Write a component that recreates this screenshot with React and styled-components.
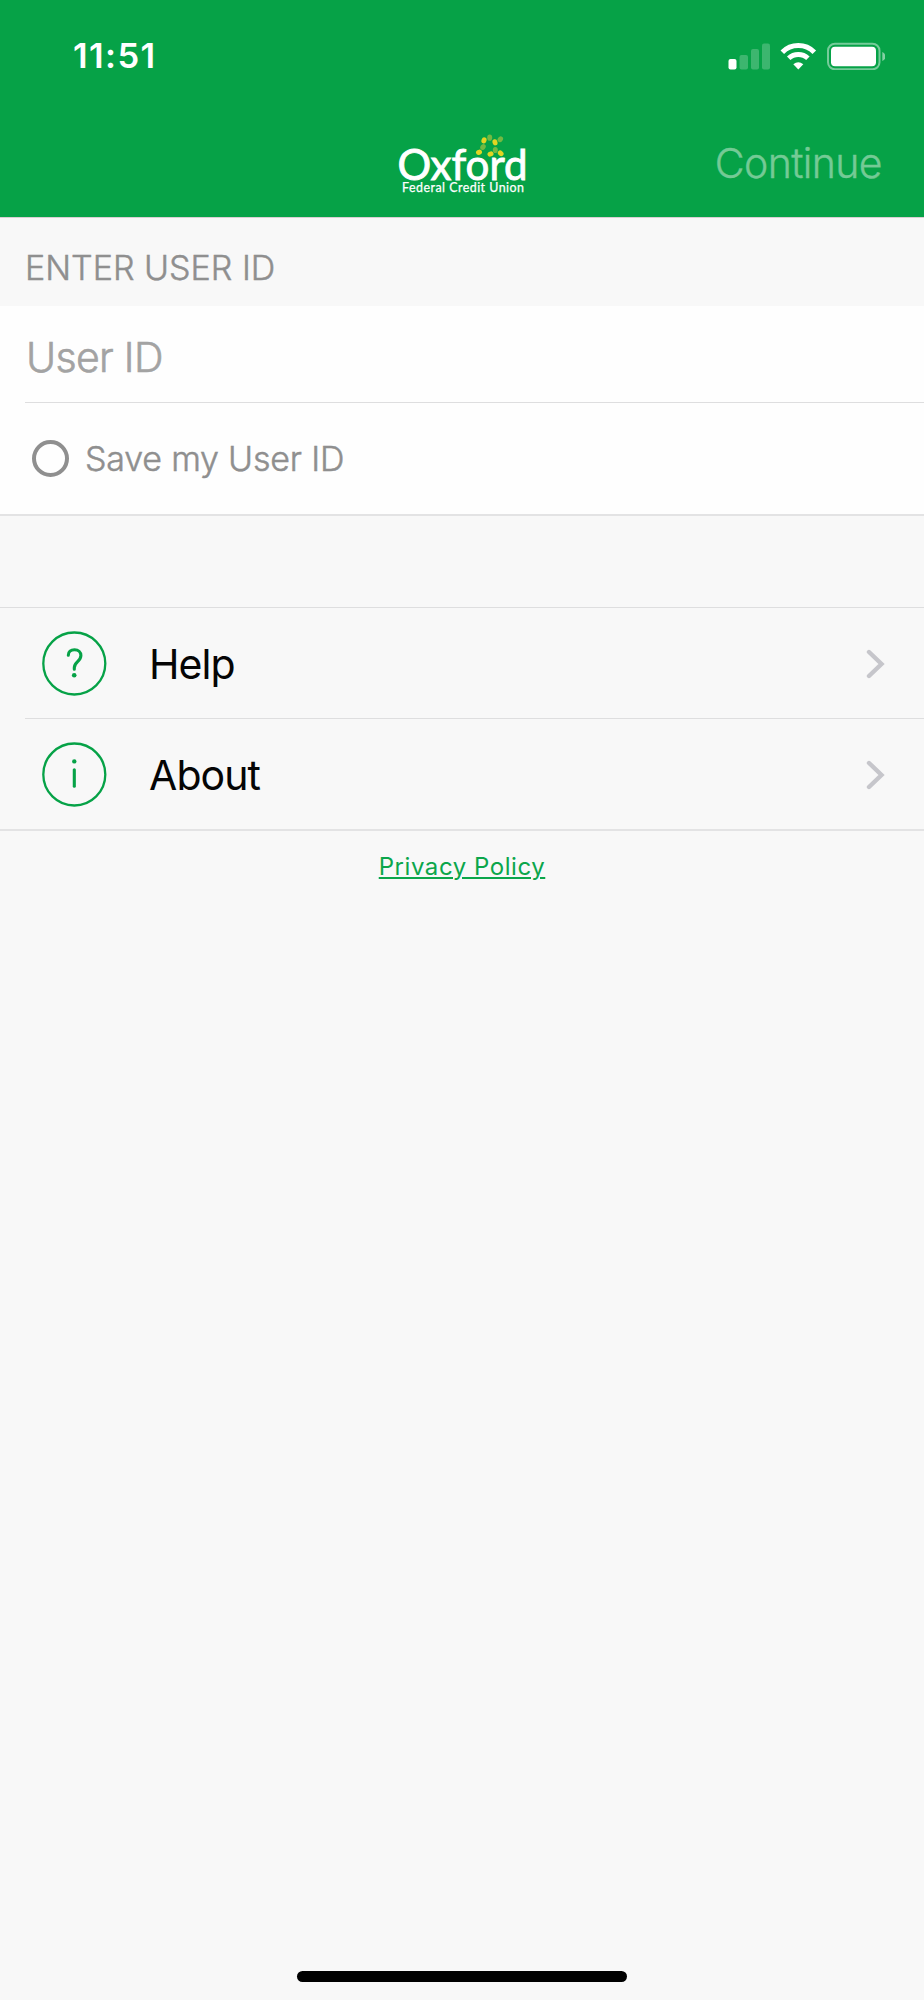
import React from "react";
import styled, { createGlobalStyle } from "styled-components";

const Palette = {
  brand: "#06a247",
  link: "#0ba64b",
  bg: "#f8f8f8",
  panel: "#fefefe",
  line: "#dededf",
  softLine: "#e3e3e4",
  dimmed: "#8f8f8f",
  placeholder: "#a3a3a3",
  chevron: "#c6c6cb",
};

const GlobalStyle = createGlobalStyle`
  * {
    box-sizing: border-box;
  }
  body {
    margin: 0;
    background: ${Palette.bg};
    font-family: Inter, "Liberation Sans", sans-serif;
  }
`;

const Screen = styled.main`
  display: flex;
  flex-direction: column;
  width: 924px;
  height: 2000px;
  background: ${Palette.bg};
`;

const HeaderBox = styled.header`
  height: 217px;
  flex: none;
  background: ${Palette.brand};
  color: #fff;
  box-shadow: 0 1px 0 #d9cfd2;
`;

const StatusBar = styled.div`
  display: flex;
  align-items: center;
  justify-content: space-between;
  height: 112px;
  padding: 0 39px 1px 73px;
`;

const Clock = styled.span`
  font-size: 34.5px;
  font-weight: 600;
  letter-spacing: 1.4px;
`;

const NavBar = styled.div`
  display: grid;
  grid-template-columns: 1fr 140px 1fr;
  align-items: center;
  height: 105px;
  padding-right: 42px;
  padding-left: 42px;

  svg {
    grid-column: 2;
    margin-top: -4px;
  }
`;

const Continue = styled.a`
  justify-self: end;
  margin-top: -3px;
  font-size: 41px;
  font-weight: 300;
  letter-spacing: -0.6px;
  color: #74ca95;
  -webkit-text-stroke: 0.4px #74ca95;
`;

const SectionTitle = styled.h2`
  display: flex;
  align-items: center;
  height: 89px;
  margin: 0;
  padding: 11px 0 0 25px;
  font-size: 34px;
  font-weight: 300;
  color: ${Palette.dimmed};
  -webkit-text-stroke: 0.5px ${Palette.dimmed};
`;

const Form = styled.section`
  background: ${Palette.panel};
  border-bottom: 2px solid ${Palette.softLine};
`;

const Input = styled.input`
  display: block;
  width: 899px;
  height: 97px;
  margin-left: 25px;
  padding: 6px 0 0 1px;
  border: none;
  border-bottom: 1px solid ${Palette.line};
  border-radius: 0;
  background: none;
  font: 300 41px Inter, sans-serif;
  letter-spacing: -0.7px;

  &::placeholder {
    color: ${Palette.placeholder};
    opacity: 1;
    -webkit-text-stroke: 0.6px ${Palette.placeholder};
  }
`;

const SaveRow = styled.label`
  display: flex;
  align-items: center;
  gap: 16px;
  height: 111px;
  padding-left: 32px;
  font-size: 34px;
  font-weight: 300;
  letter-spacing: -0.2px;
  color: ${Palette.dimmed};
  -webkit-text-stroke: 0.5px ${Palette.dimmed};
`;

const Radio = styled.i`
  width: 37px;
  height: 37px;
  border: 4px solid ${Palette.dimmed};
  border-radius: 50%;
`;

const Menu = styled.nav`
  margin-top: 91px;
  border-top: 1px solid ${Palette.line};
  border-bottom: 2px solid ${Palette.softLine};
`;

const MenuItem = styled.a`
  display: flex;
  align-items: center;
  height: ${(props) => (props.$last ? 110 : 111)}px;
  margin-left: 25px;
  padding: 0 39px 0 17px;
  border-bottom: ${(props) => (props.$last ? "none" : `1px solid ${Palette.line}`)};
  font-size: 41px;
  font-weight: 400;
  letter-spacing: -0.9px;
  color: #050505;

  span {
    flex: 1;
    margin-left: 42px;
    padding-top: 2px;
  }
`;

const Privacy = styled.a`
  align-self: center;
  margin-top: 21px;
  font-size: 24px;
  line-height: 30px;
  letter-spacing: 0.55px;
  color: ${Palette.link};
  text-decoration: underline;
  text-decoration-thickness: 2px;
  text-underline-offset: 2px;
`;

const HomeBar = styled.div`
  align-self: center;
  width: 330px;
  height: 11px;
  margin-top: auto;
  margin-bottom: 18px;
  border-radius: 6px;
  background: #000;
`;

// cx, cy, rotation, colour of every leaf over the wordmark
const leaves = [
  [88, 9.3, 20, "#e3d522"],
  [93.7, 6.7, 0, "#73b942"],
  [99, 11.3, -15, "#e3d522"],
  [104.3, 8.3, 35, "#73b942"],
  [87, 16, 35, "#73b942"],
  [83, 21.3, 70, "#e3d522"],
  [94.5, 23, 70, "#e3d522"],
  [99.3, 19, 0, "#73b942"],
  [104.7, 22.3, -50, "#e3d522"],
];

function Logo() {
  return (
    <svg width="140" height="64" viewBox="-4 0 140 64">
      <text
        x="1.5"
        y="48.6"
        fontFamily="Lato, sans-serif"
        fontSize="43"
        fontWeight="400"
        fill="#fff"
        stroke="#fff"
        strokeWidth="0.9"
        textLength="130"
        lengthAdjust="spacingAndGlyphs"
      >
        Oxford
      </text>
      {leaves.map(([x, y, turn, fill]) => (
        <ellipse
          key={`${x}-${y}`}
          cx={x}
          cy={y}
          rx="2.5"
          ry="3.1"
          fill={fill}
          transform={`rotate(${turn} ${x} ${y})`}
        />
      ))}
      <text
        x="6"
        y="61"
        fontFamily="Lato, sans-serif"
        fontSize="12.4"
        fontWeight="400"
        fill="#fff"
        stroke="#fff"
        strokeWidth="0.25"
        textLength="122"
        lengthAdjust="spacing"
      >
        Federal Credit Union
      </text>
    </svg>
  );
}

function StatusIcons() {
  return (
    <svg width="158" height="28" viewBox="727 41 158 28" fill="#fff">
      <rect x="728.5" y="58" width="8" height="10.5" rx="2" />
      <g opacity="0.22">
        <rect x="739.5" y="54" width="8.5" height="14.5" rx="2" />
        <rect x="751" y="48" width="8" height="20.5" rx="2" />
        <rect x="762" y="42.5" width="8" height="26" rx="2" />
      </g>
      <g fill="none" stroke="#fff" strokeWidth="5">
        <path d="M782.3 51.3a22.5 22.5 0 0 1 32 0" />
        <path d="M788.7 57.2a14 14 0 0 1 19.2 0" />
      </g>
      <path d="M793.3 63.3q5-4.3 10 0l-5 5.2z" />
      <rect
        x="828"
        y="42.7"
        width="51.5"
        height="25.6"
        rx="7"
        fill="none"
        stroke="#fff"
        strokeWidth="2"
        opacity="0.45"
      />
      <rect x="831" y="45.7" width="45" height="19.6" rx="4" />
      <path d="M882.3 51q3.2 1.5 3.2 4.5t-3.2 4.5z" opacity="0.5" />
    </svg>
  );
}

function CircleIcon({ children }) {
  return (
    <svg
      width="65"
      height="65"
      viewBox="0 0 65 65"
      fill="none"
      stroke={Palette.brand}
      strokeWidth="2.3"
    >
      <circle cx="32.3" cy="32.5" r="31" />
      {children}
    </svg>
  );
}

function IconHelp() {
  return (
    <CircleIcon>
      <path
        d="M26.3 24.3c0-3.4 2.5-5.5 6.2-5.5 3.8 0 6.4 2.3 6.4 5.8 0 6-6.6 6.2-6.6 12.2v1.4"
        strokeWidth="3.1"
        strokeLinecap="round"
      />
      <circle cx="32.2" cy="44.2" r="2.3" fill={Palette.brand} stroke="none" />
    </CircleIcon>
  );
}

function IconAbout() {
  return (
    <CircleIcon>
      <path d="M32.3 27.7v16.6" strokeWidth="3.1" strokeLinecap="round" />
      <circle cx="32.3" cy="19.4" r="2.2" fill={Palette.brand} stroke="none" />
    </CircleIcon>
  );
}

function Chevron() {
  return (
    <svg width="20" height="32" viewBox="0 0 20 32" fill="none">
      <path
        d="M4 5l12.5 12L4 29"
        stroke={Palette.chevron}
        strokeWidth="4.4"
        strokeLinecap="round"
      />
    </svg>
  );
}

function Header() {
  return (
    <HeaderBox>
      <StatusBar>
        <Clock>11:51</Clock>
        <StatusIcons />
      </StatusBar>
      <NavBar>
        <Logo />
        <Continue>Continue</Continue>
      </NavBar>
    </HeaderBox>
  );
}

function App() {
  return (
    <Screen>
      <GlobalStyle />
      <Header />
      <SectionTitle>ENTER USER ID</SectionTitle>
      <Form>
        <Input type="text" placeholder="User ID" />
        <SaveRow>
          <Radio />
          <span>Save my User ID</span>
        </SaveRow>
      </Form>
      <Menu>
        <MenuItem>
          <IconHelp />
          <span>Help</span>
          <Chevron />
        </MenuItem>
        <MenuItem $last>
          <IconAbout />
          <span>About</span>
          <Chevron />
        </MenuItem>
      </Menu>
      <Privacy>Privacy Policy</Privacy>
      <HomeBar />
    </Screen>
  );
}

export default App;
